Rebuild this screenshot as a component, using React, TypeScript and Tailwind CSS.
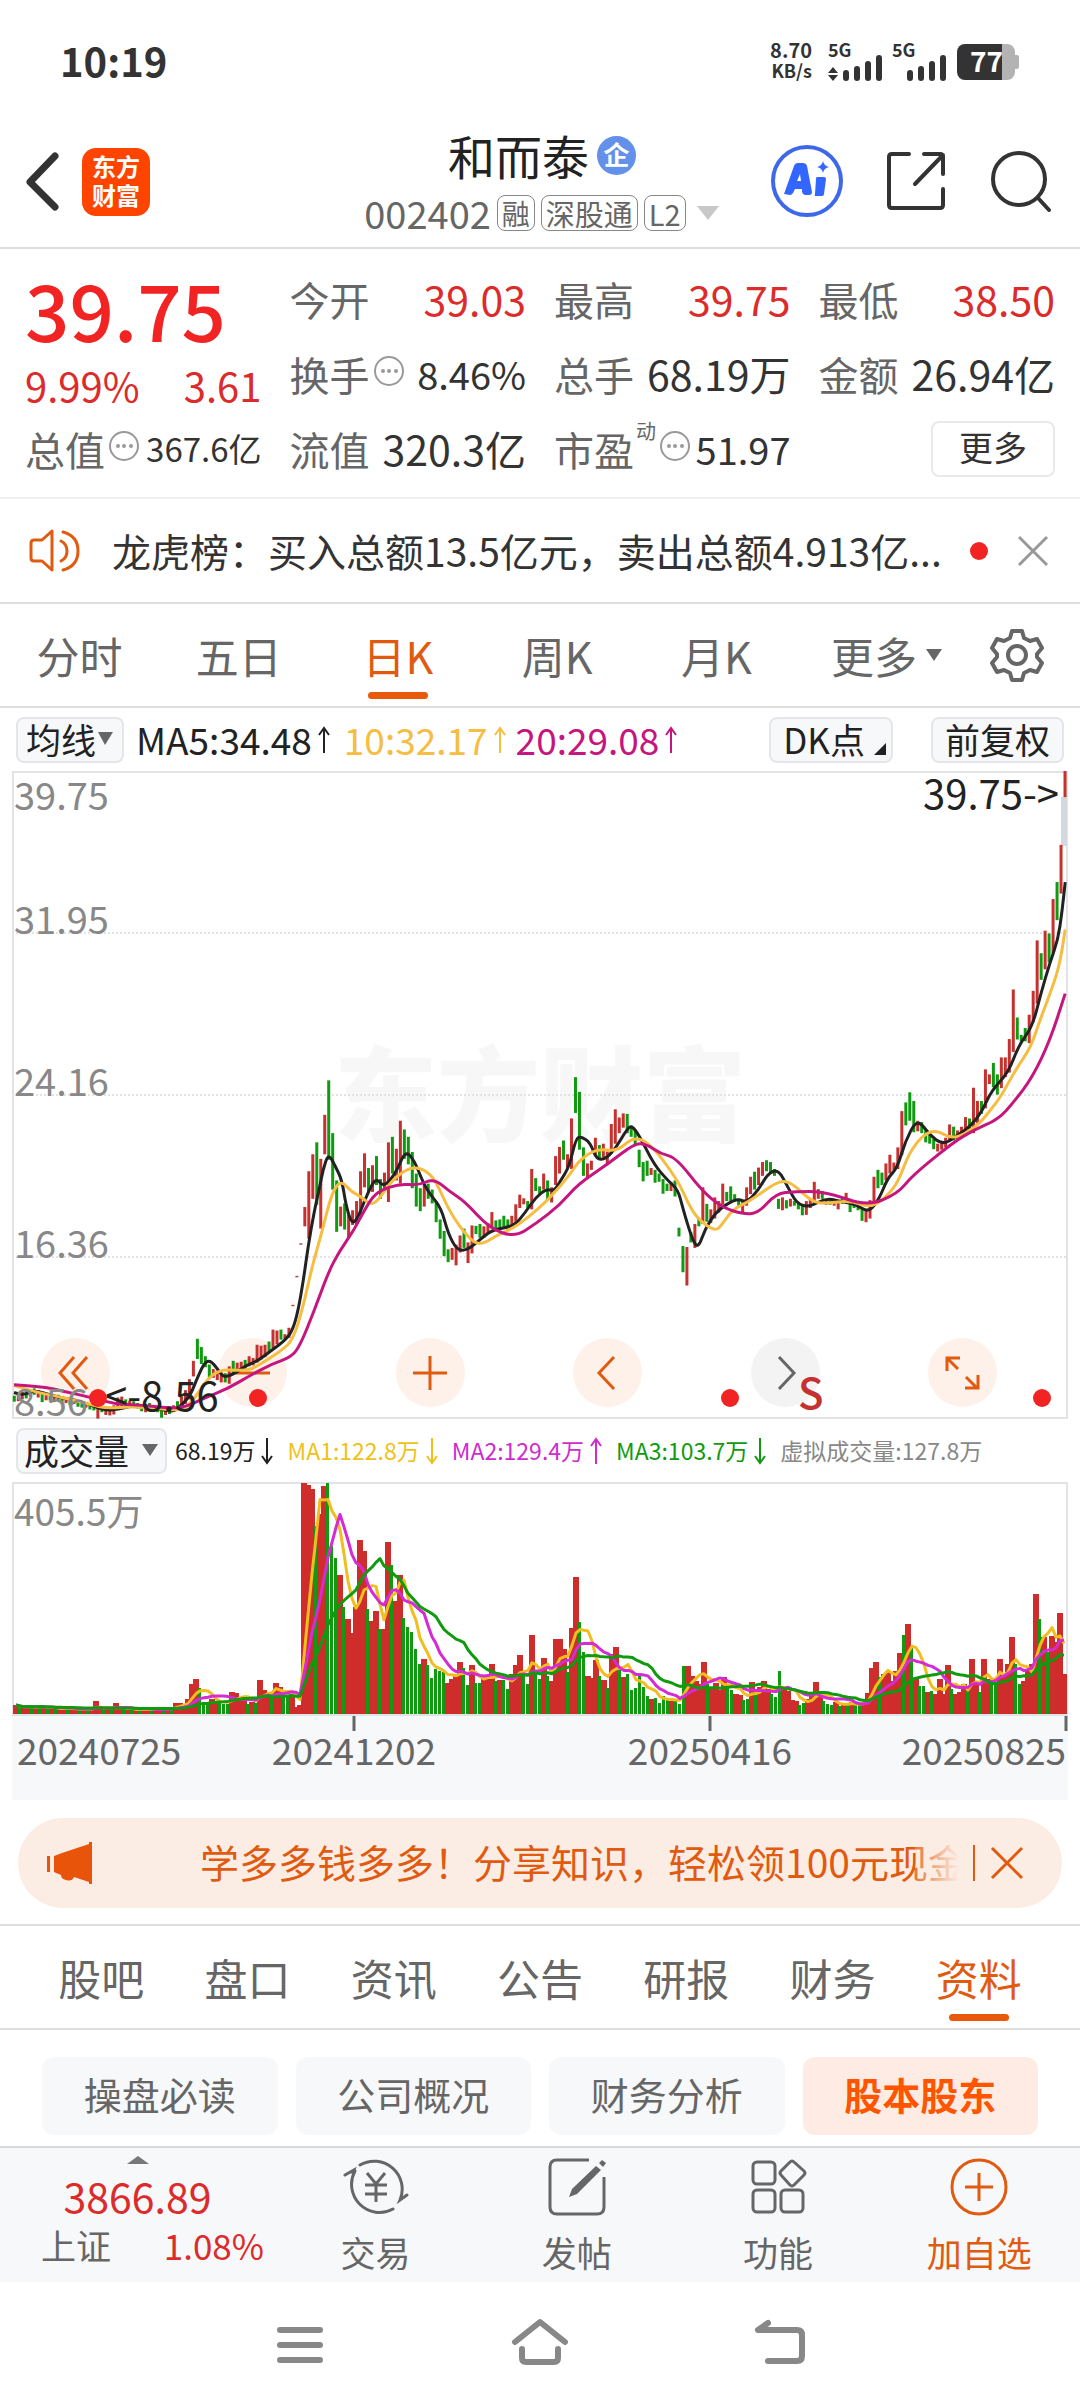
import type { ReactNode } from 'react';

// [high, low] of each candle on the chart's own grid, a negative high marks a falling day
const CANDLES: [number, number][] = [
  [-1384, 1397], [1380, 1396], [1376, 1392], [-1374, 1390], [1370, 1386], [-1368, 1382], [1372, 1388], [-1380, 1398],
  [1382, 1394], [-1380, 1394], [1384, 1398], [-1382, 1396], [-1386, 1399], [1388, 1400], [-1390, 1404], [1390, 1402],
  [-1394, 1408], [-1396, 1410], [1398, 1410], [-1402, 1414], [-1404, 1416], [1402, 1434], [-1406, 1420], [1410, 1426],
  [1412, 1427], [1405, 1425], [1388, 1410], [1386, 1412], [-1392, 1406], [1395, 1408], [-1396, 1408], [-1400, 1412],
  [-1404, 1418], [1402, 1420], [-1400, 1412], [1404, 1414], [-1406, 1420], [-1410, 1432], [1412, 1426], [-1412, 1424],
  [1405, 1418], [-1396, 1410], [1385, 1408], [1372, 1402], [1348, 1392], [1308, 1342], [-1260, 1304], [-1278, 1315],
  [-1298, 1322], [-1316, 1348], [1326, 1345], [1330, 1350], [1334, 1355], [-1335, 1355], [1320, 1358], [-1308, 1338],
  [1312, 1330], [1310, 1326], [-1306, 1325], [1298, 1320], [1302, 1318], [1273, 1312], [1275, 1305], [1273, 1300],
  [-1266, 1290], [1240, 1280], [1242, 1272], [-1240, 1262], [1250, 1262], [1236, 1258], [1186, 1189], [1123, 1126],
  [1052, 1055], [973, 1015], [895, 1042], [858, 955], [-832, 968], [868, 1020], [772, 858], [-697, 870],
  [-812, 935], [-915, 1027], [972, 1015], [-965, 1022], [990, 1040], [980, 1012], [960, 1010], [895, 990],
  [856, 930], [-888, 940], [882, 940], [-862, 925], [-912, 955], [898, 940], [832, 962], [-820, 900],
  [846, 915], [785, 922], [-804, 868], [-820, 880], [-853, 932], [-900, 972], [-932, 982], [925, 972],
  [-922, 955], [-935, 965], [-960, 1006], [-1000, 1042], [-1025, 1080], [-1065, 1093], [1062, 1088], [1055, 1100],
  [1035, 1072], [-1020, 1062], [1050, 1095], [1013, 1074], [-1014, 1032], [-1010, 1040], [1015, 1040], [1008, 1030],
  [984, 1020], [-1002, 1022], [-1000, 1020], [-992, 1018], [-1000, 1022], [992, 1020], [967, 1005], [946, 975],
  [954, 967], [-960, 975], [890, 978], [-910, 938], [-928, 945], [900, 935], [-915, 958], [930, 963],
  [862, 925], [842, 900], [-828, 870], [858, 890], [780, 890], [-690, 768], [-722, 848], [-843, 905],
  [878, 912], [872, 892], [822, 862], [-838, 868], [835, 865], [852, 880], [792, 855], [760, 835],
  [778, 812], [769, 800], [-770, 812], [-795, 820], [-805, 838], [-848, 886], [-875, 917], [-872, 905],
  [888, 903], [-892, 920], [-900, 918], [-912, 944], [-922, 938], [918, 938], [-915, 950], [-1018, 1037],
  [-1058, 1115], [1060, 1144], [-1028, 1050], [1010, 1062], [-998, 1015], [930, 1010], [-966, 1005], [978, 1008],
  [952, 998], [960, 985], [922, 968], [-940, 960], [-928, 962], [-945, 962], [-955, 970], [960, 985],
  [930, 970], [907, 945], [-896, 935], [887, 925], [875, 905], [-871, 895], [-875, 900], [-890, 905],
  [-955, 977], [952, 980], [-958, 976], [955, 972], [-960, 970], [-962, 978], [-968, 991], [960, 990],
  [955, 975], [918, 965], [934, 955], [-938, 955], [958, 968], [-955, 968], [958, 970], [962, 978],
  [-955, 966], [942, 965], [-955, 984], [-962, 975], [-965, 980], [-978, 1003], [982, 1006], [958, 998],
  [907, 970], [-892, 932], [-898, 925], [878, 915], [859, 900], [876, 892], [843, 890], [764, 860],
  [-745, 795], [-723, 785], [-742, 810], [785, 808], [-788, 812], [-805, 832], [-812, 835], [-825, 847],
  [835, 852], [832, 848], [822, 843], [793, 830], [-798, 828], [806, 825], [798, 815], [777, 808],
  [-780, 805], [713, 812], [742, 790], [-742, 770], [673, 758], [684, 705], [-659, 712], [-684, 728],
  [647, 714], [647, 690], [607, 680], [499, 635], [-560, 608], [-598, 612], [-583, 612], [554, 616],
  [502, 570], [392, 530], [-420, 478], [371, 455], [-377, 440], [302, 420], [-265, 348], [184, 290],
  [23, 80],
];

// [day, level] points of the moving averages
const MA5: [number, number][] = [
  [0, 1377], [2, 1384], [5.4, 1372], [9.9, 1385], [14.4, 1393], [18, 1400], [22.4, 1416], [26, 1414], [30.4, 1404],
  [35, 1411], [39.4, 1419], [41, 1412], [44, 1385], [45.6, 1350], [47.4, 1315], [48.7, 1307], [50, 1315], [52, 1340],
  [53, 1343], [55.4, 1335], [58, 1318], [61, 1308], [64.4, 1285], [68, 1262], [69.7, 1240], [71, 1200], [72.4, 1130],
  [73.5, 1060], [75, 985], [76.4, 930], [77.3, 890], [78.6, 856], [80.4, 885], [82, 915], [83, 970], [84.4, 1009],
  [85.8, 1000], [87.6, 960], [89.4, 925], [90.7, 911], [92.5, 930], [95.6, 897], [97.8, 850], [100, 870],
  [102.3, 920], [104, 945], [106.8, 975], [108.5, 1030], [110.8, 1068], [113.5, 1066], [117, 1040], [119.7, 1022],
  [125, 1015], [127.8, 985], [130.4, 952], [133.2, 933], [135, 939], [136.7, 915], [138.8, 885], [140.5, 823],
  [141.8, 820], [144, 832], [145.7, 870], [147.9, 868], [150.4, 845], [152.6, 812], [154.3, 793], [156.5, 820],
  [160, 880], [163.4, 915], [166, 935], [167.2, 975], [169.4, 1040], [171, 1064], [172.8, 1020], [175.4, 985],
  [178.4, 965], [181, 955], [183.2, 963], [186.2, 935], [188.3, 902], [191, 890], [193.5, 930], [195.6, 964],
  [198.6, 974], [203, 953], [207.3, 962], [210.7, 968], [213.7, 985], [216.3, 955], [218.4, 910], [220.8, 888],
  [222.8, 830], [225.8, 780], [228.8, 815], [232.2, 838], [235.7, 818], [239, 798], [242, 765], [244.3, 720],
  [248.6, 680], [251.2, 620], [254.6, 580], [256.8, 505], [259, 440], [261, 390], [262, 330], [262.8, 265],
];

const MA10: [number, number][] = [
  [0, 1362], [5.4, 1376], [10, 1384], [14.4, 1393], [19, 1403], [23.3, 1412], [29.5, 1407], [36.7, 1413], [42, 1416],
  [44.7, 1395], [47.8, 1355], [50, 1335], [52.7, 1327], [58, 1330], [60.8, 1320], [67, 1285], [69.7, 1262],
  [72, 1200], [74.6, 1100], [76.9, 1030], [79.5, 940], [81.8, 915], [84.4, 940], [86.7, 950], [89.4, 970],
  [91.6, 952], [94.7, 912], [99.2, 885], [102.8, 892], [105.4, 915], [109, 985], [113.5, 1040], [116.6, 1057],
  [120.6, 1035], [125, 1018], [128.6, 995], [133.2, 960], [138.8, 905], [141.4, 870], [145.7, 846], [150.9, 852],
  [154.7, 820], [159, 833], [166, 915], [168.5, 965], [171, 1000], [175.4, 1026], [177.1, 1010], [179.7, 978],
  [184, 960], [191, 916], [194.3, 919], [199.5, 962], [203, 965], [209, 959], [214, 974], [217.6, 955], [221, 920],
  [223.6, 858], [227, 818], [230.5, 804], [234.8, 827], [240.8, 797], [244.3, 760], [246.9, 730], [250.3, 675],
  [254.2, 625], [256.3, 570], [259.8, 490], [261.5, 440], [262.8, 368],
];

const MA20: [number, number][] = [
  [0, 1360], [7.2, 1364], [12.6, 1375], [18, 1385], [25, 1402], [32, 1405], [39.4, 1411], [43, 1408], [47.4, 1390],
  [53.6, 1368], [59, 1340], [64.4, 1315], [69.3, 1300], [71.5, 1275], [75, 1200], [78.6, 1115], [81.3, 1070],
  [84.9, 1025], [88.5, 965], [91, 938], [96.5, 922], [101, 926], [105, 911], [109, 940], [112.6, 960],
  [118.8, 1018], [125, 1039], [130.4, 1010], [136.5, 968], [141, 923], [148.7, 878], [155.2, 834], [158.2, 836],
  [161.6, 857], [165.5, 865], [172, 938], [177, 974], [182.7, 989], [186.2, 985], [190.5, 944], [195.2, 939],
  [203, 939], [213.3, 972], [221, 943], [224.5, 905], [234.8, 832], [240, 805], [246, 782], [249.9, 745],
  [254.6, 690], [259, 610], [262.8, 508],
];

// daily volume, negative on a falling day
const VOLUMES = [
  9, -7, 6, 8, -6, 7, -9, 6, -5, 6, -6, 5, 5, -5, 6, 5, -4, 5, -5, 6, 13, 5, -4, 5, -6, 11, 5, -5, 4, -4,
  5, -4, 5, 4, -4, 6, 5, -4, 7, -5, 11, 11, 10, 15, 30, 35, -26, -12, -12, 15, 13, -11, -10, -10, 22, 21, 17, 16, -10, 12,
  -11, 34, 24, 20, -18, 31, 27, -18, -18, 20, 7, 9, 231, 229, 225, -188, 200, 228, -231, -168, -156, 139, -107, 95, 81, 107,
  174, 163, -105, 93, 103, -85, 85, 172, -149, 113, 139, -96, -87, -82, -65, -50, 55, -49, -36, -45, -43, -42, 31, 35,
  40, 52, -46, -29, 49, -31, -31, 35, 36, 50, -33, 34, -34, -25, 40, 49, 59, -39, -30, 79, -40, -35, 56, -38, 33, 75, 75,
  65, -42, 86, 137, -92, -62, 38, 36, 54, -38, 34, -26, 60, 67, -44, 37, -40, -24, -26, -38, -27, -18, 15, -16, -11, -18,
  -14, 13, -14, -10, -48, 48, 38, 33, 30, 52, -30, 27, 31, 24, 37, -27, -24, 20, 19, -14, -15, 32, -22, 27, 33, 25, -20,
  -17, -43, 25, 23, 14, 13, -9, -11, 15, 20, 32, 20, -13, -10, -9, 12, -8, 10, -10, 12, -9, -9, 12, 21, 46, 52, -37, 40,
  43, 33, 43, 61, -79, 90, -66, 36, -28, -28, 22, -23, 20, 35, 20, 49, -25, 20, 22, 30, -23, 55, 30, -22, 55, 35, -32,
  -32, 55, 40, 50, 77, -50, -30, 33, 45, 50, 120, -95, 77, -62, 78, 72, 101, 40,
];

const RED = '#cf2d2b';
const GREEN = '#109a10';

const toY = (level: number) => (level - 23) * 0.459;

function smooth(points: [number, number][]) {
  const start = points[0];
  let d = `M${start[0].toFixed(1)} ${start[1].toFixed(1)}`;
  for (let i = 1; i < points.length - 1; i++) {
    const [x, y] = points[i];
    const [nx, ny] = points[i + 1];
    d += `Q${x.toFixed(1)} ${y.toFixed(1)} ${((x + nx) / 2).toFixed(1)} ${((y + ny) / 2).toFixed(1)}`;
  }
  const end = points[points.length - 1];
  return `${d}L${end[0].toFixed(1)} ${end[1].toFixed(1)}`;
}

const priceLine = (ma: [number, number][]) =>
  smooth(ma.map(([day, level]): [number, number] => [2 + day * 4, toY(level)]));

function volumeLine(days: number) {
  return VOLUMES.map((_, i) => {
    const part = VOLUMES.slice(Math.max(0, i - days + 1), i + 1);
    const avg = part.reduce((sum, v) => sum + Math.abs(v), 0) / part.length;
    return `${4 + i * 4},${(232 - avg).toFixed(1)}`;
  }).join(' ');
}

function Signal({ busy }: { busy?: boolean }) {
  return (
    <svg className="overflow-visible" width="56" height="40" viewBox="0 0 56 40" fill="#333">
      <text x="0" y="15" fontSize="18" fontWeight="700">5G</text>
      {busy && <path d="M5 25l5 6H0zM5 39l5-6H0z" />}
      <rect x="15" y="28" width="6" height="11" rx="3" />
      <rect x="26" y="24" width="6" height="15" rx="3" />
      <rect x="37" y="19" width="6" height="20" rx="3" />
      <rect x="48" y="13" width="6" height="26" rx="3" />
    </svg>
  );
}

function StatusBar() {
  return (
    <div className="flex h-[124px] items-center justify-between pr-[60px] pl-[60px] text-[#333]">
      <span className="pb-1 text-[40px] leading-none font-bold">10:19</span>
      <div className="flex items-center gap-2">
        <div className="mr-2 flex flex-col pb-1 text-right text-[20px] leading-[20px] font-bold">
          <span>8.70</span>
          <span className="text-[18px]">KB/s</span>
        </div>
        <Signal busy />
        <Signal />
        <svg className="overflow-visible" width="64" height="38" viewBox="0 0 64 38">
          <path d="M46 1h5a8 8 0 0 1 8 8v3h2a2 2 0 0 1 2 2v10a2 2 0 0 1-2 2h-2v3a8 8 0 0 1-8 8h-5z" fill="#b3b3b3" />
          <path d="M9 1h37v36H9a8 8 0 0 1-8-8V9a8 8 0 0 1 8-8z" fill="#333" />
          <text x="14" y="29" fontSize="28" fontWeight="700" fill="#fff">77</text>
        </svg>
      </div>
    </div>
  );
}

function Header() {
  return (
    <header className="flex h-[125px] items-start justify-between border-b-2 border-[#dcdddf] pr-[28px] pl-[24px]">
      <div className="flex w-[290px] items-center gap-[22px] pt-6">
        <button aria-label="返回">
          <svg width="36" height="60" viewBox="0 0 36 60" fill="none" stroke="#333" strokeWidth="7" strokeLinecap="round" strokeLinejoin="round">
            <path d="M31 4L6 30l25 25" />
          </svg>
        </button>
        <div className="flex h-[68px] w-[68px] flex-col items-center justify-center rounded-[14px] bg-[#ff4400] pb-1 text-[24px] leading-[29px] font-bold text-white">
          <span>东方</span>
          <span>财富</span>
        </div>
      </div>
      <div className="flex flex-col items-center">
        <h1 className="flex items-center gap-2 text-[47px] leading-[62px] text-[#222]">
          和而泰
          <span className="flex h-[39px] w-[39px] items-center justify-center rounded-full bg-[#6390e8] pb-[2px] text-[26px] leading-none font-bold text-white">
            企
          </span>
        </h1>
        <div className="flex items-center gap-[6px] pt-[2px] text-[#666]">
          <span className="text-[38px] leading-[50px]">002402</span>
          <span className="rounded-lg border border-[#888] px-1 text-[28px] leading-[34px]">融</span>
          <span className="rounded-lg border border-[#888] px-1 text-[29px] leading-[34px]">深股通</span>
          <span className="rounded-lg border border-[#888] px-1 text-[29px] leading-[34px]">L2</span>
          <svg className="ml-1" width="24" height="16" viewBox="0 0 24 16" fill="#c8c8c8">
            <path d="M1 1h22L12 15z" />
          </svg>
        </div>
      </div>
      <div className="flex w-[282px] items-center justify-end gap-[42px] pt-5">
        <button aria-label="AI">
          <svg width="74" height="74" viewBox="0 0 74 74">
            <circle cx="37" cy="37" r="34" fill="none" stroke="#3d68ea" strokeWidth="4" />
            <path d="M14 50L24 22q1-3 4-3h5q3 0 4 3l5 26q0 3-3 3h-4q-2 0-3-3v-3h-7l-2 4q-1 2-3 2zM27 37h4l-1-7z" fill="#3366ff" />
            <path d="M47 33h7q2 0 2 2l-2 15q0 2-2 2h-6q-2 0-1-2l1-15q0-2 1-2z" fill="#3366ff" />
            <path d="M53 17q1 5 6 6-5 1-6 6-1-5-6-6 5-1 6-6z" fill="#3366ff" />
          </svg>
        </button>
        <button aria-label="分享">
          <svg width="62" height="62" viewBox="0 0 62 62" fill="none" stroke="#333" strokeWidth="4" strokeLinecap="round" strokeLinejoin="round">
            <path d="M23 4H6q-3 0-3 3v48q0 3 3 3h48q3 0 3-3V39M38 4h16q3 0 3 3v17M57 5L29 34" />
          </svg>
        </button>
        <button aria-label="搜索">
          <svg width="62" height="64" viewBox="0 0 62 64" fill="none" stroke="#333" strokeWidth="4" strokeLinecap="round">
            <circle cx="29" cy="30" r="26" />
            <path d="M48 49l11 12" />
          </svg>
        </button>
      </div>
    </header>
  );
}

function InfoDots() {
  return (
    <svg className="mb-1 ml-1 shrink-0" width="31" height="31" viewBox="0 0 31 31" fill="#999">
      <circle cx="15" cy="15" r="14" fill="none" stroke="#999" strokeWidth="2" />
      <circle cx="9" cy="15" r="2" />
      <circle cx="15" cy="15" r="2" />
      <circle cx="22" cy="15" r="2" />
    </svg>
  );
}

function Stat({ label, extra, children }: { label: string; extra?: ReactNode; children: ReactNode }) {
  return (
    <div className="flex h-[75px] items-center justify-between whitespace-nowrap">
      <div className="flex items-center">
        <span className="text-[40px] text-[#666]">{label}</span>
        {extra}
      </div>
      {children}
    </div>
  );
}

function Quote() {
  return (
    <section className="grid h-[250px] grid-cols-4 gap-x-7 border-b-2 border-[#efeff1] px-[25px] pt-[12px] leading-none">
      <div>
        <div className="pt-[9px] text-[78px] leading-[76px] font-medium text-[#f22323]">39.75</div>
        <div className="flex h-[65px] items-center justify-between pt-3 text-[40px] text-[#dc2b2b]">
          <span>9.99%</span>
          <span>3.61</span>
        </div>
        <Stat label="总值" extra={<InfoDots />}>
          <span className="text-[33px] text-[#333]">367.6亿</span>
        </Stat>
      </div>
      <div>
        <Stat label="今开"><span className="text-[41px] text-[#dc2b2b]">39.03</span></Stat>
        <Stat label="换手" extra={<InfoDots />}><span className="text-[38px] text-[#333]">8.46%</span></Stat>
        <Stat label="流值"><span className="text-[41px] text-[#333]">320.3亿</span></Stat>
      </div>
      <div>
        <Stat label="最高"><span className="text-[41px] text-[#dc2b2b]">39.75</span></Stat>
        <Stat label="总手"><span className="text-[41px] text-[#333]">68.19万</span></Stat>
        <Stat
          label="市盈"
          extra={
            <>
              <span className="mb-9 ml-[2px] text-[20px] text-[#666]">动</span>
              <InfoDots />
            </>
          }
        >
          <span className="text-[38px] text-[#333]">51.97</span>
        </Stat>
      </div>
      <div>
        <Stat label="最低"><span className="text-[41px] text-[#dc2b2b]">38.50</span></Stat>
        <Stat label="金额"><span className="text-[41px] text-[#333]">26.94亿</span></Stat>
        <div className="flex h-[75px] items-center justify-end">
          <button className="h-[56px] w-[124px] rounded-lg border-2 border-[#e8e9eb] pb-1 text-[34px] leading-none text-[#333]">
            更多
          </button>
        </div>
      </div>
    </section>
  );
}

function News() {
  return (
    <div className="flex h-[105px] items-center border-b-2 border-[#dcdddf] pr-[30px] pl-[28px]">
      <svg className="shrink-0" width="54" height="48" viewBox="0 0 54 48" fill="none" stroke="#e05a10" strokeWidth="3" strokeLinejoin="round">
        <path d="M24 4v39L14 34H6q-3 0-3-3V16q0-3 3-3h8z" />
        <path d="M33 14q6 3 6 10t-6 10M35 5q15 4 15 19T35 43" strokeLinecap="round" />
      </svg>
      <a href="#" className="ml-[30px] flex-1 overflow-hidden pb-[2px] text-[39px] leading-[58px] whitespace-nowrap text-[#333]">
        龙虎榜：买入总额13.5亿元，卖出总额4.913亿...
      </a>
      <span className="mx-[28px] h-[18px] w-[18px] shrink-0 rounded-full bg-[#f22323]" />
      <button aria-label="关闭">
        <svg width="34" height="34" viewBox="0 0 34 34" stroke="#999" strokeWidth="3">
          <path d="M3 3l28 28M31 3L3 31" />
        </svg>
      </button>
    </div>
  );
}

function PeriodTabs() {
  const periods = ['分时', '五日', '日K', '周K', '月K'];
  return (
    <nav className="flex h-[104px] items-stretch border-b-2 border-[#dcdddf] text-[43px] leading-none text-[#666]">
      <div className="grid flex-1 grid-cols-5">
        {periods.map((p) => (
          <button key={p} className={p === '日K' ? 'relative text-[#e05a10]' : 'relative'}>
            {p}
            {p === '日K' && (
              <span className="absolute bottom-[7px] left-1/2 h-[7px] w-[60px] -translate-x-1/2 rounded-full bg-[#e8590c]" />
            )}
          </button>
        ))}
      </div>
      <div className="flex w-[284px] items-center justify-between pr-[36px] pl-[35px]">
        <button className="flex items-center gap-2">
          更多
          <svg width="18" height="14" viewBox="0 0 18 14" fill="#666">
            <path d="M1 1h16L9 13z" />
          </svg>
        </button>
        <button aria-label="设置">
          <svg width="54" height="54" viewBox="0 0 54 54" fill="none" stroke="#666" strokeWidth="4" strokeLinejoin="round">
            <path d="M22 3h10l2 7 6 3 7-2 5 9-5 6v3l5 6-5 9-7-2-6 3-2 7H22l-2-7-6-3-7 2-5-9 5-6v-3l-5-6 5-9 7 2 6-3z" />
            <circle cx="27" cy="27" r="9" />
          </svg>
        </button>
      </div>
    </nav>
  );
}

const chipButton = 'flex h-[46px] items-center rounded-lg border-2 border-[#e4e6ea] bg-[#f7f8fa] pb-[2px] leading-none text-[#222]';

function PriceBar() {
  return (
    <div className="flex h-[63px] items-center pr-[16px] pl-[16px] text-[37px] leading-none whitespace-nowrap">
      <button className={`${chipButton} px-2 text-[35px]`}>
        均线
        <svg width="18" height="14" viewBox="0 0 18 14" fill="#666">
          <path d="M2 0h15L9 13z" />
        </svg>
      </button>
      <span className="ml-3 flex items-center text-[#222]">MA5:34.48<Arrow up /></span>
      <span className="ml-3 flex items-center text-[#f5bd41]">10:32.17<Arrow up /></span>
      <span className="ml-2 flex items-center text-[#c5157f]">20:29.08<Arrow up /></span>
      <button className={`${chipButton} ml-auto gap-2 pr-1 pl-3 text-[35px]`}>
        DK点
        <svg className="mt-5" width="14" height="14" viewBox="0 0 14 14" fill="#222">
          <path d="M13 1v12H1z" />
        </svg>
      </button>
      <button className={`${chipButton} ml-[38px] px-3 text-[35px]`}>前复权</button>
    </div>
  );
}

function Arrow({ up }: { up?: boolean }) {
  return (
    <svg className="ml-1" width="16" height="28" viewBox="0 0 16 28" fill="none" stroke="currentColor" strokeWidth="2">
      <path d={up ? 'M8 27V3M3 9l5-7 5 7' : 'M8 1v24M3 19l5 7 5-7'} />
    </svg>
  );
}

function ChartButton({ label, muted, children }: { label: string; muted?: boolean; children: ReactNode }) {
  return (
    <button
      aria-label={label}
      className={
        muted
          ? 'flex h-[69px] w-[69px] items-center justify-center rounded-full bg-[#f3f3f3] text-[#666]'
          : 'flex h-[69px] w-[69px] items-center justify-center rounded-full bg-[#fef1ea] text-[#e05a10]'
      }
    >
      <svg width="40" height="40" viewBox="0 0 40 40" fill="none" stroke="currentColor" strokeWidth="3">
        {children}
      </svg>
    </button>
  );
}

function PriceChart() {
  return (
    <div className="relative mx-3">
      <div className="absolute right-[71px] bottom-[12px] left-[29px] flex justify-between">
        <ChartButton label="最早"><path d="M18 4L4 20l14 16M31 4L17 20l14 16" /></ChartButton>
        <ChartButton label="缩小"><path d="M3 20h34" /></ChartButton>
        <ChartButton label="放大"><path d="M3 20h34M20 3v34" /></ChartButton>
        <ChartButton label="向左"><path d="M26 4L11 20l15 16" /></ChartButton>
        <ChartButton label="向右" muted><path d="M14 4l15 16-15 16" /></ChartButton>
        <ChartButton label="全屏">
          <path d="M5 18V5h13M5 5l11 11M36 22v13H23M35 35L24 24" />
        </ChartButton>
      </div>
      <svg className="pointer-events-none relative block h-auto w-full" viewBox="0 0 1056 648">
        <text x="322" y="363" fontSize="103" fontWeight="900" fill="#999" fillOpacity="0.08">东方财富</text>
        <g stroke="#e2e3e5" strokeWidth="2" strokeDasharray="2 2">
          <path d="M0 162h1055M0 324h1055M0 486h1055" />
        </g>
        <rect x="1" y="1" width="1054" height="646" fill="none" stroke="#e2e3e5" strokeWidth="2" />
        <rect x="1049" y="26" width="6" height="49" fill="#d5d8de" />
        {CANDLES.map(([hi, lo], i) => (
          <rect
            key={i}
            x={i * 3.98 + 0.8}
            y={toY(Math.abs(hi))}
            width="3"
            height={toY(lo) - toY(Math.abs(hi))}
            fill={hi > 0 ? '#c4312f' : GREEN}
          />
        ))}
        <g fill="none" strokeWidth="3" strokeLinejoin="round">
          <path d={priceLine(MA5)} stroke="#222" />
          <path d={priceLine(MA10)} stroke="#f5bd41" />
          <path d={priceLine(MA20)} stroke="#c5157f" />
        </g>
        <g fill="#888" fontSize="38">
          <text x="2" y="39">39.75</text>
          <text x="2" y="163">31.95</text>
          <text x="2" y="325">24.16</text>
          <text x="2" y="487">16.36</text>
          <text x="2" y="645">8.56</text>
        </g>
        <g fill="#222" fontSize="40">
          <text x="93" y="640">&lt;-8.56</text>
          <text x="1047" y="38" textAnchor="end">39.75-&gt;</text>
        </g>
        <g fill="#f22323">
          <circle cx="86" cy="627" r="9" />
          <circle cx="246" cy="627" r="9" />
          <circle cx="718" cy="627" r="9" />
          <circle cx="1030" cy="627" r="9" />
        </g>
        <text x="786" y="638" fontSize="42" fontWeight="500" fill="#c4312f">S</text>
      </svg>
    </div>
  );
}

function VolumeBar() {
  return (
    <div className="flex h-[63px] items-center gap-3 pr-[16px] pl-[16px] text-[23px] leading-none whitespace-nowrap">
      <button className={`${chipButton} -mr-1 gap-3 px-[6px] text-[35px]`}>
        成交量
        <svg width="18" height="14" viewBox="0 0 18 14" fill="#666">
          <path d="M1 1h16L9 13z" />
        </svg>
      </button>
      <span className="flex items-center text-[#222]">68.19万<Arrow /></span>
      <span className="flex items-center text-[#efc21a]">MA1:122.8万<Arrow /></span>
      <span className="flex items-center text-[#cf2bd0]">MA2:129.4万<Arrow up /></span>
      <span className="flex items-center text-[#109a10]">MA3:103.7万<Arrow /></span>
      <span className="text-[#888]">虚拟成交量:127.8万</span>
    </div>
  );
}

function VolumeChart() {
  return (
    <div className="mx-3 bg-[#f7f8fa]">
      <svg className="block h-auto w-full" viewBox="0 0 1056 318">
        <rect x="1" y="1" width="1054" height="232" fill="#fff" stroke="#e2e3e5" strokeWidth="2" />
        <text x="2" y="44" fontSize="37" fill="#888">405.5万</text>
        {VOLUMES.map((v, i) => (
          <rect
            key={i}
            x={v > 0 ? i * 4 + 1 : i * 4 + 2}
            y={232 - Math.abs(v)}
            width={v > 0 ? Math.min(6, 1055 - i * 4) : 3}
            height={Math.abs(v)}
            fill={v > 0 ? RED : GREEN}
          />
        ))}
        <g fill="none" strokeWidth="3" strokeLinejoin="round">
          <polyline points={volumeLine(5)} stroke="#f0be1e" />
          <polyline points={volumeLine(10)} stroke="#d52bd5" />
          <polyline points={volumeLine(20)} stroke={GREEN} />
        </g>
        <path d="M342 234v15M698 234v15M1054 234v15" stroke="#666" strokeWidth="3" />
        <g fill="#666" fontSize="37">
          <text x="5" y="283">20240725</text>
          <text x="342" y="283" textAnchor="middle">20241202</text>
          <text x="698" y="283" textAnchor="middle">20250416</text>
          <text x="1054" y="283" textAnchor="end">20250825</text>
        </g>
      </svg>
    </div>
  );
}

function Banner() {
  return (
    <div className="border-b-2 border-[#dcdddf] px-[18px] pt-[18px] pb-[16px]">
      <div className="flex h-[90px] items-center rounded-full bg-[#fcede4] pr-[37px] pl-[28px]">
        <svg className="shrink-0" width="50" height="42" viewBox="0 0 50 42" fill="#e8550a">
          <rect x="1" y="14" width="3" height="16" />
          <path d="M8 14l8-3L43 2V0h3v42h-3v-2l-15-5q-2 5-8 3-5-1-5-5l-7-3z" />
        </svg>
        <div className="relative ml-[104px] flex-1 overflow-hidden pb-1 text-[39px] leading-[58px] whitespace-nowrap text-[#e05a10]">
          学多多钱多多！分享知识，轻松领100元现金
          <span className="absolute inset-y-0 right-0 w-[44px] bg-linear-to-r from-[#fcede4]/20 to-[#fcede4]" />
        </div>
        <span className="ml-[14px] h-[36px] w-[2px] bg-[#e05a10]" />
        <button className="ml-[14px]" aria-label="关闭">
          <svg width="36" height="36" viewBox="0 0 36 36" stroke="#e05a10" strokeWidth="3">
            <path d="M3 3l30 30M33 3L3 33" />
          </svg>
        </button>
      </div>
    </div>
  );
}

function InfoTabs() {
  const tabs = ['股吧', '盘口', '资讯', '公告', '研报', '财务', '资料'];
  const topics = ['操盘必读', '公司概况', '财务分析', '股本股东'];
  return (
    <>
      <nav className="grid h-[104px] grid-cols-7 border-b-2 border-[#dcdddf] px-7 text-[43px] leading-none text-[#666]">
        {tabs.map((t) => (
          <button key={t} className={t === '资料' ? 'relative text-[#e05a10]' : 'relative'}>
            {t}
            {t === '资料' && (
              <span className="absolute bottom-[7px] left-1/2 h-[7px] w-[60px] -translate-x-1/2 rounded-full bg-[#e8590c]" />
            )}
          </button>
        ))}
      </nav>
      <div className="grid grid-cols-4 gap-[18px] px-[42px] pt-[27px] pb-[11px] text-[38px] leading-none">
        {topics.map((t) => (
          <button
            key={t}
            className={
              t === '股本股东'
                ? 'h-[78px] rounded-xl bg-[#feece4] pb-1 font-bold text-[#ff5500]'
                : 'h-[78px] rounded-xl bg-[#f7f8fa] pb-1 text-[#666]'
            }
          >
            {t}
          </button>
        ))}
      </div>
    </>
  );
}

function BarItem({ label, active, children }: { label: string; active?: boolean; children: ReactNode }) {
  return (
    <button
      className={
        active
          ? 'flex flex-1 flex-col items-center pt-[9px] text-[#e05a10]'
          : 'flex flex-1 flex-col items-center pt-[9px] text-[#666]'
      }
    >
      <svg width="66" height="60" viewBox="0 0 66 60" fill="none" stroke="currentColor" strokeWidth="3">
        {children}
      </svg>
      <span className="pt-[13px] text-[35px] leading-[44px]">{label}</span>
    </button>
  );
}

function BottomBar() {
  return (
    <footer className="flex h-[136px] border-t-2 border-[#d6dadd] bg-[#f7f8fa]">
      <button className="flex w-[275px] flex-col items-center pt-[8px] leading-none">
        <svg width="22" height="8" viewBox="0 0 22 8" fill="#777">
          <path d="M0 8L11 0l11 8z" />
        </svg>
        <span className="pt-[9px] text-[41px] leading-[44px] text-[#dc2b2b]">3866.89</span>
        <span className="flex w-full justify-between pr-[11px] pl-[41px] text-[35px] leading-[56px]">
          <span className="text-[#666]">上证</span>
          <span className="text-[#dc2b2b]">1.08%</span>
        </span>
      </button>
      <BarItem label="交易">
        <path d="M17 8A28 28 0 0 1 57 43l7-5M12 14A28 28 0 0 0 50 52M2 18l9-5-1 3" strokeLinecap="round" />
        <path d="M24 16l9 11 9-11M22 28h22M22 37h22M33 27v18" />
      </BarItem>
      <BarItem label="发帖">
        <path d="M45 3H13q-7 0-7 7v40q0 7 7 7h40q7 0 7-7V20" />
        <path d="M52 9l5 4-24 24-8 3 3-8zM55 6l3-3 4 3-3 4z" fill="currentColor" stroke="none" />
      </BarItem>
      <BarItem label="功能">
        <rect x="8" y="5" width="22" height="22" rx="4" />
        <rect x="8" y="33" width="22" height="22" rx="4" />
        <rect x="36" y="33" width="22" height="22" rx="4" />
        <path d="M45 5q2-2 4 0l10 9q2 2 0 4l-10 10q-2 2-4 0L36 18q-2-2 0-4z" />
      </BarItem>
      <BarItem label="加自选" active>
        <circle cx="33" cy="30" r="27" />
        <path d="M33 16v28M19 30h28" />
      </BarItem>
    </footer>
  );
}

function SystemNav() {
  return (
    <div className="flex h-[126px] items-center justify-center gap-[180px]">
      <button aria-label="最近任务">
        <svg width="60" height="60" viewBox="0 0 60 60" stroke="#888" strokeWidth="6" strokeLinecap="round">
          <path d="M10 15h40M10 30h40M10 45h40" />
        </svg>
      </button>
      <button aria-label="主屏幕">
        <svg width="60" height="60" viewBox="0 0 60 60" fill="none" stroke="#888" strokeWidth="6" strokeLinecap="round" strokeLinejoin="round">
          <path d="M5 27L30 7l25 20M12 34v9q0 4 4 4h28q4 0 4-4v-9" />
        </svg>
      </button>
      <button aria-label="后退">
        <svg width="60" height="60" viewBox="0 0 60 60" fill="none" stroke="#888" strokeWidth="6" strokeLinecap="round" strokeLinejoin="round">
          <path d="M18 8L8 15h39q5 0 5 5v21q0 5-5 5H18" />
        </svg>
      </button>
    </div>
  );
}

export default function App() {
  return (
    <div className="bg-white font-['Noto_Sans_CJK_SC',sans-serif]">
      <StatusBar />
      <Header />
      <Quote />
      <News />
      <PeriodTabs />
      <PriceBar />
      <PriceChart />
      <VolumeBar />
      <VolumeChart />
      <Banner />
      <InfoTabs />
      <BottomBar />
      <SystemNav />
    </div>
  );
}
